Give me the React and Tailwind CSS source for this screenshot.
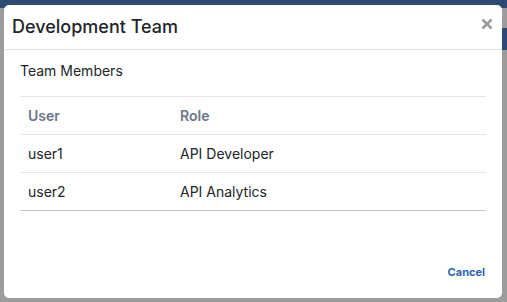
export default function App() {
  return (
    <div className="relative h-[302px] w-[507px] overflow-hidden bg-[#9c9c9c] font-['Inter',sans-serif]">
      {/* backdrop strip of the page behind the overlay */}
      <div className="absolute inset-x-0 top-0 h-[8px] bg-[#2d4a72]" />
      <div className="absolute right-0 top-[28px] h-[22px] w-[10px] bg-[#2d4a72]" />

      <div className="absolute left-[4px] top-[5px] flex h-[293px] w-[498px] flex-col rounded-[5px] bg-white">
        <div className="relative flex h-[45px] items-center border-b border-[#dee2e6] pl-[8px]">
          <h2 className="text-[18px] font-medium leading-none text-[#212529]">Development Team</h2>
          <button className="absolute right-[9px] top-[13px] text-[#9a9a9a]">
            <svg width="12" height="12" viewBox="0 0 12 12">
              <path d="M1.5 1.5 L10.5 10.5 M10.5 1.5 L1.5 10.5" stroke="currentColor" strokeWidth="2.6" strokeLinecap="butt" />
            </svg>
          </button>
        </div>

        <div className="flex-1 px-[16px] pt-[12px]">
          <p className="text-[14px] leading-[17px] text-[#212529]">Team Members</p>
          <table className="mt-[17px] w-[466px] text-left text-[14px] text-[#212529]">
            <thead>
              <tr className="border-t border-b border-[#e3e5e8]">
                <th className="h-[38px] w-[160px] pl-[8px] font-semibold text-[#6a7689]">User</th>
                <th className="h-[38px] pl-0 font-semibold text-[#6a7689]">Role</th>
              </tr>
            </thead>
            <tbody>
              <tr className="border-b border-[#e3e5e8]">
                <td className="h-[38px] pl-[8px]">user1</td>
                <td className="h-[38px]">API Developer</td>
              </tr>
              <tr className="border-b border-[#c4c4c4]">
                <td className="h-[38px] pl-[8px]">user2</td>
                <td className="h-[38px]">API Analytics</td>
              </tr>
            </tbody>
          </table>
        </div>

        <div className="flex justify-end pb-[18px] pr-[17px]">
          <button className="text-[11px] font-bold text-[#2a64b4]">Cancel</button>
        </div>
      </div>
    </div>
  );
}
